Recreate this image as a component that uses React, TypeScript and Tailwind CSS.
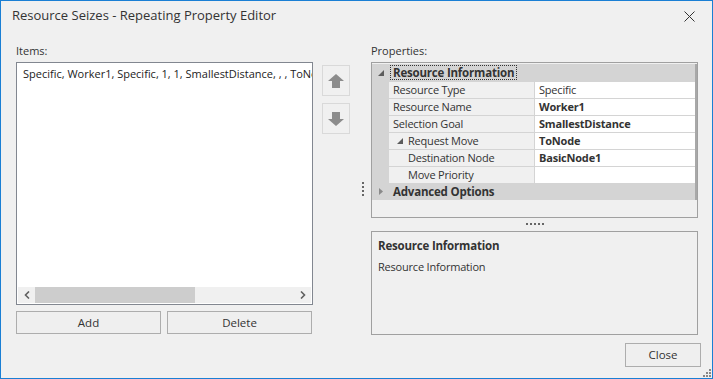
import { ReactNode } from 'react';

const font = { fontFamily: '"Open Sans", "Noto Sans", sans-serif' };

const UpArrow = ({ down = false }: { down?: boolean }) => (
  <svg width="16" height="14" viewBox="0 0 16 14" className={down ? 'rotate-180' : ''}>
    <polygon points="8,0 16,7 12,7 12,14 4,14 4,7 0,7" fill="#8c8c8c" />
  </svg>
);

const Expanded = () => (
  <svg width="6" height="6" viewBox="0 0 6 6">
    <polygon points="6,0 6,6 0,6" fill="#5c5c5c" />
  </svg>
);

const Collapsed = () => (
  <svg width="4" height="7" viewBox="0 0 4 7">
    <polygon points="0,0 4,3.5 0,7" fill="#8a8a8a" />
  </svg>
);

type Row = { name: string; value: string; bold?: boolean; indent?: number; expander?: boolean };

const rows: Row[] = [
  { name: 'Resource Type', value: 'Specific' },
  { name: 'Resource Name', value: 'Worker1', bold: true },
  { name: 'Selection Goal', value: 'SmallestDistance', bold: true },
  { name: 'Request Move', value: 'ToNode', bold: true, indent: 1, expander: true },
  { name: 'Destination Node', value: 'BasicNode1', bold: true, indent: 2 },
  { name: 'Move Priority', value: '', indent: 2 },
];

const Category = ({ label, open, focused }: { label: string; open: boolean; focused?: boolean }) => (
  <div className="flex h-[17px] items-center bg-[#d4d4d4]">
    <div className="flex w-[17px] justify-center">{open ? <Expanded /> : <Collapsed />}</div>
    <span
      className={`ml-[1px] px-[3px] text-[11.5px] leading-[15px] font-bold tracking-[-0.2px] text-[#333] ${
        focused ? 'outline-1 outline-dotted outline-[#333] -outline-offset-1' : ''
      }`}
    >
      {label}
    </span>
  </div>
);

const Btn = ({ children, className }: { children: ReactNode; className: string }) => (
  <div
    className={`flex h-[23px] items-center justify-center border border-[#adadad] bg-[#efefef] text-[11.5px] text-[#333] ${className}`}
  >
    {children}
  </div>
);

export default function App() {
  return (
    <div
      style={font}
      className="relative flex h-[379px] w-[713px] flex-col border border-[#1a7fd4] bg-[#f0f0f0] text-[#333]"
    >
      {/* title bar */}
      <div className="flex h-[30px] items-center justify-between pl-[11px] pr-[17px]">
        <span className="text-[13px] text-[#333]">Resource Seizes - Repeating Property Editor</span>
        <svg width="11" height="11" viewBox="0 0 11 11">
          <path d="M0.5 0.5 L10.5 10.5 M10.5 0.5 L0.5 10.5" stroke="#333" strokeWidth="1" />
        </svg>
      </div>

      <div className="flex pl-[15px] pt-[12px]">
        {/* items column */}
        <div className="flex w-[297px] flex-col">
          <div className="h-[19px] text-[11px] leading-[16px] text-[#333]">Items:</div>
          <div className="flex h-[243px] flex-col border border-[#828790] bg-white">
            <div className="flex-1 overflow-hidden whitespace-nowrap pl-[6px] pt-[3px] text-[11px] leading-[16px] text-[#222]">
              Specific, Worker1, Specific, 1, 1, SmallestDistance, , , ToNode, BasicNode1
            </div>
            <div className="mx-[1px] mb-[1px] flex h-[16px] items-center bg-[#f0f0f0]">
              <div className="flex w-[17px] justify-center">
                <svg width="6" height="8" viewBox="0 0 6 8">
                  <path d="M5 0.5 L1.5 4 L5 7.5" stroke="#606060" strokeWidth="1.6" fill="none" />
                </svg>
              </div>
              <div className="h-[16px] w-[160px] bg-[#cdcdcd]" />
              <div className="flex-1" />
              <div className="flex w-[17px] justify-center">
                <svg width="6" height="8" viewBox="0 0 6 8">
                  <path d="M1 0.5 L4.5 4 L1 7.5" stroke="#606060" strokeWidth="1.6" fill="none" />
                </svg>
              </div>
            </div>
          </div>
          <div className="mt-[6px] flex gap-[6px]">
            <Btn className="w-[145px]">Add</Btn>
            <Btn className="w-[145px]">Delete</Btn>
          </div>
        </div>

        {/* move buttons + splitter */}
        <div className="flex w-[58px] pt-[22px]">
          <div className="ml-[9px] flex flex-col gap-[7px]">
            <div className="flex h-[31px] w-[28px] items-center justify-center border border-[#d9d9d9]">
              <UpArrow />
            </div>
            <div className="flex h-[31px] w-[28px] items-center justify-center border border-[#d9d9d9]">
              <UpArrow down />
            </div>
          </div>
          <div className="ml-[12px] mt-[117px] flex h-[16px] flex-col gap-[2px]">
            {[0, 1, 2, 3].map((i) => (
              <div key={i} className="h-[2px] w-[2px] bg-[#666]" />
            ))}
          </div>
        </div>

        {/* properties column */}
        <div className="flex w-[327px] flex-col">
          <div className="h-[19px] text-[11px] leading-[16px] text-[#333]">Properties:</div>
          <div className="flex h-[156px] flex-col border border-[#a0a0a0] bg-[#f0f0f0]">
            <div className="mt-[1px] border-r-2 border-[#a8a8a8] bg-[#d4d4d4]">
              <Category label="Resource Information" open focused />
              {rows.map((r) => (
                <div key={r.name} className="flex h-[17px] bg-[#d4d4d4]">
                  <div className="ml-[17px] flex w-[145px] items-center border-t border-[#d4d4d4] bg-[#f0f0f0] pl-[4px] text-[11px] tracking-[-0.2px] text-[#333]">
                    {r.indent ? <div className={r.indent === 1 ? 'w-[4px]' : 'w-[15px]'} /> : null}
                    {r.expander ? (
                      <div className="mr-[5px] flex w-[6px] items-center">
                        <Expanded />
                      </div>
                    ) : null}
                    <span className="whitespace-nowrap">{r.name}</span>
                  </div>
                  <div
                    className={`flex flex-1 items-center border-l border-t border-[#d4d4d4] bg-white pl-[4px] text-[11px] tracking-[-0.2px] text-[#333] ${
                      r.bold ? 'font-bold' : ''
                    }`}
                  >
                    {r.value}
                  </div>
                </div>
              ))}
              <Category label="Advanced Options" open={false} />
            </div>
          </div>
          <div className="flex h-[13px] items-center justify-center gap-[2px] pb-[1px]">
            {[0, 1, 2, 3, 4].map((i) => (
              <div key={i} className="h-[2px] w-[2px] bg-[#666]" />
            ))}
          </div>
          <div className="h-[104px] border border-[#a0a0a0] bg-[#f0f0f0] px-[6px] pt-[6px]">
            <div className="text-[11.5px] font-bold leading-[16px] tracking-[-0.2px] text-[#333]">
              Resource Information
            </div>
            <div className="mt-[5px] text-[11px] leading-[16px] tracking-[-0.2px] text-[#333]">
              Resource Information
            </div>
          </div>
        </div>
      </div>

      {/* footer */}
      <div className="flex justify-end pr-[11px] pt-[8px]">
        <Btn className="h-[24px] w-[76px]">Close</Btn>
      </div>

      {/* resize grip */}
      <div className="absolute bottom-[1px] right-[1px] grid grid-cols-3 gap-[1px]">
        {[0, 1, 2, 3, 4, 5, 6, 7, 8].map((i) => (
          <div key={i} className={`h-[2px] w-[2px] ${[2, 4, 5, 6, 7, 8].includes(i) ? 'bg-[#888]' : ''}`} />
        ))}
      </div>
    </div>
  );
}
